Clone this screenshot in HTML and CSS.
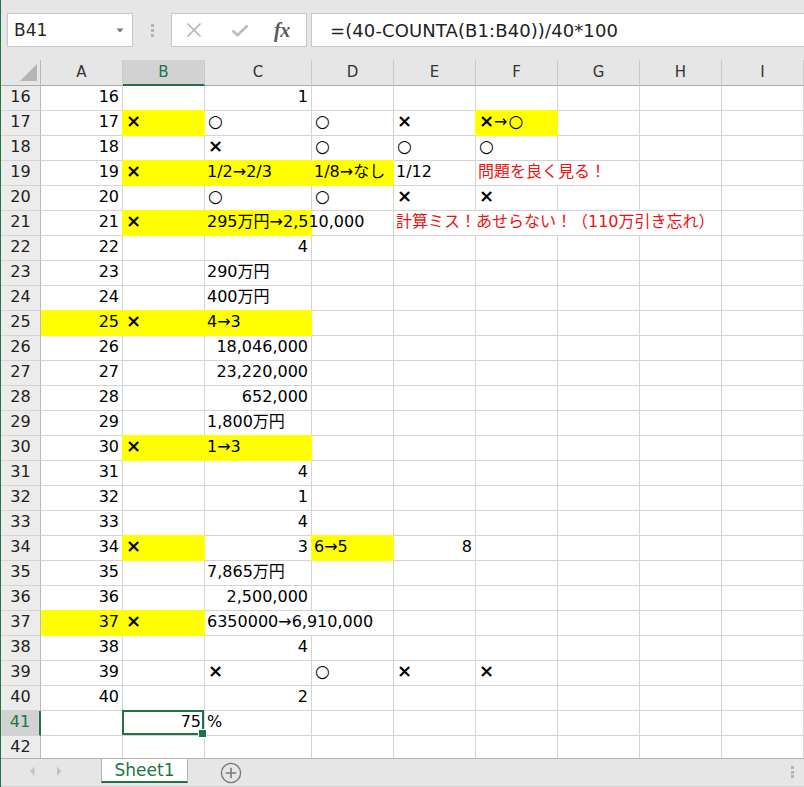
FILE: index.html
```html
<!DOCTYPE html>
<html lang="ja">
<head>
<meta charset="utf-8">
<title>Sheet1</title>
<link rel="stylesheet" href="styles.css">
</head>
<body>
<div class="app">
  <div class="topbar">
    <div class="namebox"><span>B41</span><svg class="dd" width="8" height="5" viewBox="0 0 8 5"><path d="M0.5 0.5h7l-3.5 4z" fill="#777"/></svg></div>
    <div class="vdots"><i></i><i></i><i></i></div>
    <div class="fbtns">
      <svg class="bx" width="16" height="16" viewBox="0 0 16 16"><path d="M1.5 1.5L14.5 14.5M14.5 1.5L1.5 14.5" stroke="#b3b3b3" stroke-width="1.6" fill="none"/></svg>
      <svg class="bv" width="18" height="16" viewBox="0 0 18 16"><path d="M1.5 8.5L6.5 13.2L16.5 3.5" stroke="#bdbdbd" stroke-width="2.6" fill="none"/></svg>
      <span class="fx">fx</span>
    </div>
    <div class="formula">=(40-COUNTA(B1:B40))/40*100</div>
  </div>

  <div class="sheet">
    <div class="grid">
      <div class="ch corner"><svg class="tri" width="17" height="17" viewBox="0 0 17 17"><path d="M17 0V17H0z" fill="#b5b5b5"/></svg></div>
      <div class="ch">A</div><div class="ch selh">B</div><div class="ch">C</div><div class="ch">D</div><div class="ch">E</div><div class="ch">F</div><div class="ch">G</div><div class="ch">H</div><div class="ch">I</div>

      <div class="rh">16</div><div class="c r">16</div><div class="c"></div><div class="c r">1</div><div class="c"></div><div class="c"></div><div class="c"></div><div class="c"></div><div class="c"></div><div class="c"></div>

      <div class="rh">17</div><div class="c r">17</div><div class="c y"><span class="m">×</span></div><div class="c"><span class="o">○</span></div><div class="c"><span class="o">○</span></div><div class="c"><span class="m">×</span></div><div class="c y"><span class="m">×</span>→<span class="o">○</span></div><div class="c"></div><div class="c"></div><div class="c"></div>

      <div class="rh">18</div><div class="c r">18</div><div class="c"></div><div class="c"><span class="m">×</span></div><div class="c"><span class="o">○</span></div><div class="c"><span class="o">○</span></div><div class="c"><span class="o">○</span></div><div class="c"></div><div class="c"></div><div class="c"></div>

      <div class="rh">19</div><div class="c r">19</div><div class="c y"><span class="m">×</span></div><div class="c y">1/2→2/3</div><div class="c y">1/8→なし</div><div class="c">1/12</div><div class="c red nb">問題を良く見る！</div><div class="c"></div><div class="c"></div><div class="c"></div>

      <div class="rh">20</div><div class="c r">20</div><div class="c"></div><div class="c"><span class="o">○</span></div><div class="c"><span class="o">○</span></div><div class="c"><span class="m">×</span></div><div class="c"><span class="m">×</span></div><div class="c"></div><div class="c"></div><div class="c"></div>

      <div class="rh">21</div><div class="c r">21</div><div class="c y"><span class="m">×</span></div><div class="c y nb">295万円→2,510,000</div><div class="c"></div><div class="c red nb">計算ミス！あせらない！（110万引き忘れ）</div><div class="c nb"></div><div class="c nb"></div><div class="c"></div><div class="c"></div>

      <div class="rh">22</div><div class="c r">22</div><div class="c"></div><div class="c r">4</div><div class="c"></div><div class="c"></div><div class="c"></div><div class="c"></div><div class="c"></div><div class="c"></div>

      <div class="rh">23</div><div class="c r">23</div><div class="c"></div><div class="c">290万円</div><div class="c"></div><div class="c"></div><div class="c"></div><div class="c"></div><div class="c"></div><div class="c"></div>

      <div class="rh">24</div><div class="c r">24</div><div class="c"></div><div class="c">400万円</div><div class="c"></div><div class="c"></div><div class="c"></div><div class="c"></div><div class="c"></div><div class="c"></div>

      <div class="rh">25</div><div class="c r y ya">25</div><div class="c y"><span class="m">×</span></div><div class="c y">4→3</div><div class="c"></div><div class="c"></div><div class="c"></div><div class="c"></div><div class="c"></div><div class="c"></div>

      <div class="rh">26</div><div class="c r">26</div><div class="c"></div><div class="c r">18,046,000</div><div class="c"></div><div class="c"></div><div class="c"></div><div class="c"></div><div class="c"></div><div class="c"></div>

      <div class="rh">27</div><div class="c r">27</div><div class="c"></div><div class="c r">23,220,000</div><div class="c"></div><div class="c"></div><div class="c"></div><div class="c"></div><div class="c"></div><div class="c"></div>

      <div class="rh">28</div><div class="c r">28</div><div class="c"></div><div class="c r">652,000</div><div class="c"></div><div class="c"></div><div class="c"></div><div class="c"></div><div class="c"></div><div class="c"></div>

      <div class="rh">29</div><div class="c r">29</div><div class="c"></div><div class="c">1,800万円</div><div class="c"></div><div class="c"></div><div class="c"></div><div class="c"></div><div class="c"></div><div class="c"></div>

      <div class="rh">30</div><div class="c r">30</div><div class="c y"><span class="m">×</span></div><div class="c y">1→3</div><div class="c"></div><div class="c"></div><div class="c"></div><div class="c"></div><div class="c"></div><div class="c"></div>

      <div class="rh">31</div><div class="c r">31</div><div class="c"></div><div class="c r">4</div><div class="c"></div><div class="c"></div><div class="c"></div><div class="c"></div><div class="c"></div><div class="c"></div>

      <div class="rh">32</div><div class="c r">32</div><div class="c"></div><div class="c r">1</div><div class="c"></div><div class="c"></div><div class="c"></div><div class="c"></div><div class="c"></div><div class="c"></div>

      <div class="rh">33</div><div class="c r">33</div><div class="c"></div><div class="c r">4</div><div class="c"></div><div class="c"></div><div class="c"></div><div class="c"></div><div class="c"></div><div class="c"></div>

      <div class="rh">34</div><div class="c r">34</div><div class="c y"><span class="m">×</span></div><div class="c r">3</div><div class="c y">6→5</div><div class="c r">8</div><div class="c"></div><div class="c"></div><div class="c"></div><div class="c"></div>

      <div class="rh">35</div><div class="c r">35</div><div class="c"></div><div class="c">7,865万円</div><div class="c"></div><div class="c"></div><div class="c"></div><div class="c"></div><div class="c"></div><div class="c"></div>

      <div class="rh">36</div><div class="c r">36</div><div class="c"></div><div class="c r">2,500,000</div><div class="c"></div><div class="c"></div><div class="c"></div><div class="c"></div><div class="c"></div><div class="c"></div>

      <div class="rh">37</div><div class="c r y ya">37</div><div class="c y"><span class="m">×</span></div><div class="c nb">6350000→6,910,000</div><div class="c"></div><div class="c"></div><div class="c"></div><div class="c"></div><div class="c"></div><div class="c"></div>

      <div class="rh">38</div><div class="c r">38</div><div class="c"></div><div class="c r">4</div><div class="c"></div><div class="c"></div><div class="c"></div><div class="c"></div><div class="c"></div><div class="c"></div>

      <div class="rh">39</div><div class="c r">39</div><div class="c"></div><div class="c"><span class="m">×</span></div><div class="c"><span class="o">○</span></div><div class="c"><span class="m">×</span></div><div class="c"><span class="m">×</span></div><div class="c"></div><div class="c"></div><div class="c"></div>

      <div class="rh">40</div><div class="c r">40</div><div class="c"></div><div class="c r">2</div><div class="c"></div><div class="c"></div><div class="c"></div><div class="c"></div><div class="c"></div><div class="c"></div>

      <div class="rh selr">41</div><div class="c"></div><div class="c r sel">75</div><div class="c">%</div><div class="c"></div><div class="c"></div><div class="c"></div><div class="c"></div><div class="c"></div><div class="c"></div>

      <div class="rh">42</div><div class="c"></div><div class="c"></div><div class="c"></div><div class="c"></div><div class="c"></div><div class="c"></div><div class="c"></div><div class="c"></div><div class="c"></div>
    </div>
  </div>

  <div class="tabbar">
    <svg class="navs" width="100" height="26" viewBox="0 0 100 26"><path d="M33.5 7.5L29 12.3L33.5 17z" fill="#c4c4c4"/><path d="M56 7.5L60.5 12.3L56 17z" fill="#c4c4c4"/></svg>
    <div class="tab">Sheet1</div>
    <svg class="add" width="22" height="22" viewBox="0 0 22 22"><circle cx="11" cy="11" r="9.6" fill="none" stroke="#7a7a7a" stroke-width="1.4"/><path d="M11 5.8V16.2M5.8 11H16.2" stroke="#7a7a7a" stroke-width="1.6"/></svg>
    <div class="rdots"><i></i><i></i><i></i></div>
  </div>
</div>
</body>
</html>
```

FILE: styles.css
```css
* { box-sizing: border-box; }
html, body { margin: 0; padding: 0; }
body {
  width: 804px;
  height: 787px;
  overflow: hidden;
  background: #fff;
  font-family: "DejaVu Sans", "Noto Sans CJK JP", sans-serif;
  color: #000;
}
.app {
  width: 804px;
  height: 787px;
  border-left: 1px solid #217346;
  display: flex;
  flex-direction: column;
  overflow: hidden;
}

/* ---------- top bar ---------- */
.topbar {
  flex: none;
  height: 60px;
  background: #e6e6e6;
  display: flex;
  align-items: flex-start;
  padding-top: 13px;
}
.namebox {
  position: relative;
  margin-left: 6px;
  width: 126px;
  height: 34px;
  background: #fff;
  border: 1px solid #c6c6c6;
  display: flex;
  align-items: center;
  padding-left: 6px;
  font-size: 17px;
  color: #262626;
}
.namebox .dd { position: absolute; right: 8px; top: 14px; }
.vdots {
  margin-left: 18px;
  width: 3px;
  height: 34px;
  padding-top: 11px;
  display: flex;
  flex-direction: column;
  gap: 2px;
}
.vdots i, .rdots i { display: block; width: 3px; height: 3px; background: #b4b4b4; }
.fbtns {
  margin-left: 17px;
  width: 136px;
  height: 34px;
  background: #fff;
  border: 1px solid #c6c6c6;
  display: flex;
  align-items: center;
}
.fbtns .bx { margin-left: 14px; }
.fbtns .bv { margin-left: 29px; }
.fbtns .fx {
  margin-left: 25px;
  font-family: "Liberation Serif", serif;
  font-style: italic;
  font-weight: bold;
  font-size: 20px;
  color: #5a5a5a;
  letter-spacing: -0.5px;
}
.formula {
  margin-left: 4px;
  flex: 1;
  height: 34px;
  background: #fff;
  border: 1px solid #c6c6c6;
  border-right: none;
  display: flex;
  align-items: center;
  padding-left: 18px;
  font-size: 18px;
  color: #222;
  white-space: nowrap;
  letter-spacing: 0.1px;
}

/* ---------- sheet grid ---------- */
.sheet {
  flex: none;
  height: 698px;
  overflow: hidden;
  background: #fff;
}
.grid {
  display: grid;
  grid-template-columns: 40px 82px 82px 107px repeat(6, 82px);
  grid-template-rows: 26px;
  grid-auto-rows: 25px;
}
.ch {
  background: #e6e6e6;
  border-right: 1px solid #c8c8c8;
  border-bottom: 1px solid #ababab;
  text-align: center;
  font-size: 15px;
  line-height: 25px;
  color: #333;
}
.ch.corner { position: relative; border-right-color: #b9b9b9; }
.ch.corner .tri { position: absolute; left: 19px; top: 4px; }
.ch.selh {
  background: #d2d2d2;
  color: #217346;
  border-bottom: 2px solid #217346;
}
.rh {
  background: #ececec;
  border-right: 1px solid #b9b9b9;
  border-bottom: 1px solid #d4d4d4;
  text-align: center;
  font-size: 16px;
  line-height: 22px;
  color: #222;
}
.rh.selr {
  background: #d2d2d2;
  color: #217346;
  border-right: 2px solid #217346;
}
.c {
  border-right: 1px solid #d4d4d4;
  border-bottom: 1px solid #d4d4d4;
  font-size: 16px;
  line-height: 22px;
  padding: 0 3px 0 2px;
  white-space: nowrap;
  overflow: visible;
}
.c .m {
  font-weight: bold;
  font-size: 18px;
  line-height: 18px;
  display: inline-block;
  margin-left: 1px;
}
.c .o {
  font-size: 17px;
  line-height: 18px;
  display: inline-block;
  margin-left: 1px;
}
.c.r { text-align: right; }
.c.y {
  background: #ffff00;
  border-right-color: #ffff00;
  border-bottom-color: #ffff00;
  box-shadow: 0 -1px 0 #ffff00, -1px 0 0 #ffff00, -1px -1px 0 #ffff00;
}
.c.ya { box-shadow: 0 -1px 0 #ffff00; }
.c.nb { border-right-color: transparent; }
.c.y.nb { border-right-color: #ffff00; }
.c.red { color: #ee1111; }
.c.sel { position: relative; z-index: 2; }
.c.sel::after {
  content: "";
  position: absolute;
  left: -1px;
  top: -1px;
  right: 0;
  bottom: 0;
  border: 2px solid #217346;
}
.c.sel::before {
  content: "";
  position: absolute;
  right: -3px;
  bottom: -3px;
  width: 7px;
  height: 7px;
  background: #217346;
  border: 1px solid #fff;
  z-index: 1;
}

/* ---------- tab bar ---------- */
.tabbar {
  flex: none;
  height: 29px;
  background: #e6e6e6;
  border-top: 1px solid #b3b3b3;
  border-bottom: 1px solid #cfcfcf;
  display: flex;
  align-items: flex-start;
}
.navs { flex: none; }
.tab {
  flex: none;
  width: 87px;
  height: 24px;
  background: #fff;
  border-left: 1px solid #b3b3b3;
  border-right: 1px solid #b3b3b3;
  border-bottom: 2px solid #217346;
  text-align: center;
  font-size: 17px;
  line-height: 22px;
  color: #217346;
}
.add { flex: none; margin-left: 32px; margin-top: 3px; }
.rdots {
  margin-left: auto;
  margin-right: 10px;
  margin-top: 7px;
  display: flex;
  flex-direction: column;
  gap: 1.5px;
}
```
